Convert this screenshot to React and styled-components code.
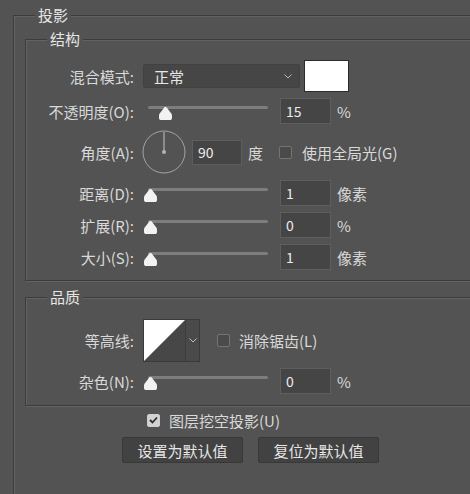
import React from 'react'
import styled, { createGlobalStyle } from 'styled-components'

const GlobalStyle = createGlobalStyle`
  html, body {
    margin: 0;
    padding: 0;
    background: #535353;
    overflow: hidden;
  }
  body {
    font-family: "Noto Sans CJK SC", "Microsoft YaHei", sans-serif;
    font-size: 15px;
    color: #d9d9d9;
  }
`

const Page = styled.div`
  width: 470px;
  height: 494px;
  overflow: hidden;
  padding: 5px 0 0 13px;
  box-sizing: border-box;
`

const Group = styled.fieldset`
  margin: ${p => (p.$outer ? '0' : '4px 0 0 11px')};
  padding: 0;
  min-width: 0;
  width: ${p => (p.$outer ? '520px' : 'auto')};
  height: ${p => (p.$outer ? '540px' : 'auto')};
  box-sizing: border-box;
  border: 1px solid #3c3c3c;
  box-shadow: inset 1px 1px 0 #636363, 1px 1px 0 #636363;
`

const Legend = styled.legend`
  margin-left: 21px;
  padding: 0 3px;
  line-height: 20px;
  background: #535353;
  color: #e6e6e6;
`

const Rows = styled.div`
  display: flex;
  flex-direction: column;
  gap: 6px;
  padding: ${p => p.$pad};
`

const Row = styled.div`
  display: flex;
  align-items: center;
  height: ${p => p.$h || 26}px;
`

const Label = styled.span`
  width: 108px;
  flex-shrink: 0;
  margin-right: 9px;
  text-align: right;
  white-space: nowrap;
`

const Select = styled.div`
  width: 157px;
  height: 24px;
  box-sizing: border-box;
  display: flex;
  align-items: center;
  justify-content: space-between;
  padding: 0 7px 0 10px;
  background: #464646;
  border: 1px solid #414141;
  border-radius: 2px;
  color: #e8e8e8;
`

const Swatch = styled.div`
  width: 45px;
  height: 32px;
  margin-left: 4px;
  box-sizing: border-box;
  background: #ffffff;
  border: 1px solid #2c2c2c;
`

const Slider = styled.div`
  position: relative;
  width: 125px;
  height: 26px;
  flex-shrink: 0;
`

const Track = styled.div`
  position: absolute;
  left: 5px;
  right: 0;
  top: 8px;
  height: 3px;
  border-radius: 2px;
  background: #7d7d7d;
`

const Thumb = styled.svg`
  position: absolute;
  top: 9px;
`

const NumberBox = styled.div`
  width: ${p => p.$w || 51}px;
  height: ${p => p.$h || 26}px;
  margin-left: ${p => p.$gap}px;
  box-sizing: border-box;
  padding-left: 5px;
  line-height: ${p => (p.$h || 26) - 2}px;
  font-size: 14px;
  background: #454545;
  border: 1px solid #5e5e5e;
  color: #ececec;
`

const Unit = styled.span`
  margin-left: 6px;
  white-space: nowrap;
`

const Box = styled.span`
  display: inline-flex;
  align-items: center;
  justify-content: center;
  width: 13px;
  height: 13px;
  margin-left: ${p => p.$gap || 0}px;
  box-sizing: border-box;
  border-radius: 2px;
  border: 1px solid ${p => (p.$checked ? '#cfcfcf' : '#747474')};
  background: ${p => (p.$checked ? '#d2d2d2' : '#4a4a4a')};
  flex-shrink: 0;
`

const CheckText = styled.span`
  margin-left: ${p => p.$gap}px;
  white-space: nowrap;
`

const Contour = styled.div`
  display: flex;
  width: 57px;
  height: 43px;
  box-sizing: border-box;
  border: 1px solid #3a3a3a;
  background: #474747;
`

const ContourMenu = styled.div`
  flex: 1;
  display: flex;
  align-items: center;
  justify-content: center;
  border-left: 1px solid #3d3d3d;
  background: #4a4a4a;
`

const Footer = styled.div`
  display: flex;
  flex-direction: column;
  padding-top: 4px;
`

const CheckRow = styled.div`
  display: flex;
  align-items: center;
  height: 20px;
  padding-left: 133px;
`

const Buttons = styled.div`
  display: flex;
  gap: 15px;
  margin-top: 7px;
  padding-left: 108px;
`

const Button = styled.button`
  width: 121px;
  height: 26px;
  padding: 0;
  font: inherit;
  color: #e6e6e6;
  background: #424242;
  border: 1px solid #383838;
  border-radius: 2px;
`

function Chevron() {
  return (
    <svg width="8" height="5" viewBox="0 0 8 5">
      <polyline points="0.5,0.5 4,4 7.5,0.5" fill="none" stroke="#bdbdbd" strokeWidth="1" />
    </svg>
  )
}

function Check({ checked, gap }) {
  return (
    <Box $checked={checked} $gap={gap}>
      {checked && (
        <svg width="9" height="8" viewBox="0 0 9 8">
          <polyline points="1,4 3.5,6.5 8,1.5" fill="none" stroke="#2e2e2e" strokeWidth="1.8" />
        </svg>
      )}
    </Box>
  )
}

function RangeSlider({ value }) {
  const left = 0.5 + (value / 100) * 105
  return (
    <Slider>
      <Track />
      <Thumb width="13" height="13" viewBox="0 0 13 13" style={{ left }}>
        <path
          d="M6.5 0C7.2 0 7.8 .6 8.3 1.2L12.3 6.5C12.8 7.2 13 7.8 13 8.6L13 11C13 12.4 12 13 11 13L2 13C1 13 0 12.4 0 11L0 8.6C0 7.8 .2 7.2 .7 6.5L4.7 1.2C5.2 .6 5.8 0 6.5 0Z"
          fill="#f2f2f2"
        />
      </Thumb>
    </Slider>
  )
}

function SliderRow({ label, value, pos, unit }) {
  return (
    <Row>
      <Label>{label}</Label>
      <RangeSlider value={pos} />
      <NumberBox $gap={12}>{value}</NumberBox>
      <Unit>{unit}</Unit>
    </Row>
  )
}

function Dial() {
  return (
    <svg width="44" height="44" viewBox="0 0 44 44" style={{ marginLeft: -1 }}>
      <circle cx="22" cy="22" r="21" fill="none" stroke="#a3a3a3" strokeWidth="1" />
      <line x1="22" y1="22" x2="22" y2="2" stroke="#c4c4c4" strokeWidth="1" />
      <circle cx="22" cy="22" r="2" fill="#b4b4b4" />
    </svg>
  )
}

export default function App() {
  return (
    <Page>
      <GlobalStyle />
      <Group $outer>
        <Legend>投影</Legend>

        <Group>
          <Legend>结构</Legend>
          <Rows $pad="11px 0 10px 0">
            <Row $h={32}>
              <Label>混合模式:</Label>
              <Select>
                正常
                <Chevron />
              </Select>
              <Swatch />
            </Row>
            <SliderRow label="不透明度(O):" value="15" pos={15} unit="%" />
            <Row $h={44}>
              <Label>角度(A):</Label>
              <Dial />
              <NumberBox $gap={6} $w={50} $h={25}>90</NumberBox>
              <Unit>度</Unit>
              <Check gap={16} />
              <CheckText $gap={10}>使用全局光(G)</CheckText>
            </Row>
            <SliderRow label="距离(D):" value="1" pos={0} unit="像素" />
            <SliderRow label="扩展(R):" value="0" pos={0} unit="%" />
            <SliderRow label="大小(S):" value="1" pos={0} unit="像素" />
          </Rows>
        </Group>

        <Group style={{ marginTop: 6 }}>
          <Legend>品质</Legend>
          <Rows $pad="12px 0 11px 0">
            <Row $h={43}>
              <Label>等高线:</Label>
              <Contour>
                <svg width="41" height="41" viewBox="0 0 41 41">
                  <rect width="41" height="41" fill="#474747" />
                  <polygon points="0,0 41,0 0,41" fill="#ffffff" />
                </svg>
                <ContourMenu>
                  <Chevron />
                </ContourMenu>
              </Contour>
              <Check gap={17} />
              <CheckText $gap={9}>消除锯齿(L)</CheckText>
            </Row>
            <SliderRow label="杂色(N):" value="0" pos={0} unit="%" />
          </Rows>
        </Group>

        <Footer>
          <CheckRow>
            <Check checked />
            <CheckText $gap={9}>图层挖空投影(U)</CheckText>
          </CheckRow>
          <Buttons>
            <Button>设置为默认值</Button>
            <Button>复位为默认值</Button>
          </Buttons>
        </Footer>
      </Group>
    </Page>
  )
}
